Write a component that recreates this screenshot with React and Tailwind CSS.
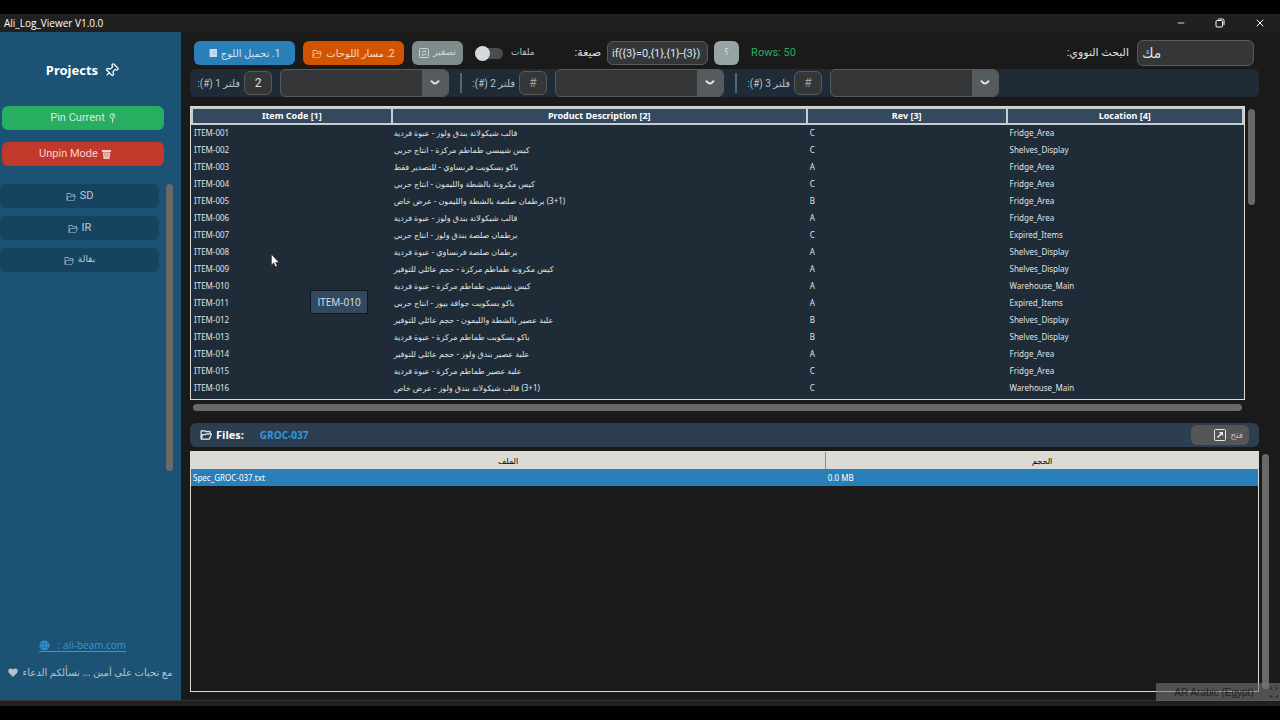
import React, { useState } from 'react';
import { VscFolderOpened } from 'react-icons/vsc';
import { Minus, X, Pin } from 'lucide-react';

const projects = [
  { name: 'SD', size: 'text-[11px]' },
  { name: 'IR', size: 'text-[11px]' },
  { name: 'بقالة', size: 'text-[9px]' },
];

const items = [
  ['ITEM-001', 'قالب شيكولاتة بندق ولوز - عبوة فردية', 'C', 'Fridge_Area'],
  ['ITEM-002', 'كيس شيبسي طماطم مركزة - انتاج حربي', 'C', 'Shelves_Display'],
  ['ITEM-003', 'باكو بسكويت فرنساوي - للتصدير فقط', 'A', 'Fridge_Area'],
  ['ITEM-004', 'كيس مكرونة بالشطة والليمون - انتاج حربي', 'C', 'Fridge_Area'],
  ['ITEM-005', '(3+1) برطمان صلصة بالشطة والليمون - عرض خاص', 'B', 'Fridge_Area'],
  ['ITEM-006', 'قالب شيكولاتة بندق ولوز - عبوة فردية', 'A', 'Fridge_Area'],
  ['ITEM-007', 'برطمان صلصة بندق ولوز - انتاج حربي', 'C', 'Expired_Items'],
  ['ITEM-008', 'برطمان صلصة فرنساوي - عبوة فردية', 'A', 'Shelves_Display'],
  ['ITEM-009', 'كيس مكرونة طماطم مركزة - حجم عائلي للتوفير', 'A', 'Shelves_Display'],
  ['ITEM-010', 'كيس شيبسي طماطم مركزة - عبوة فردية', 'A', 'Warehouse_Main'],
  ['ITEM-011', 'باكو بسكويت جوافة بيور - انتاج حربي', 'A', 'Expired_Items'],
  ['ITEM-012', 'علبة عصير بالشطة والليمون - حجم عائلي للتوفير', 'B', 'Shelves_Display'],
  ['ITEM-013', 'باكو بسكويت طماطم مركزة - عبوة فردية', 'B', 'Shelves_Display'],
  ['ITEM-014', 'علبة عصير بندق ولوز - حجم عائلي للتوفير', 'A', 'Fridge_Area'],
  ['ITEM-015', 'علبة عصير طماطم مركزة - عبوة فردية', 'C', 'Fridge_Area'],
  ['ITEM-016', '(3+1) قالب شيكولاتة بندق ولوز - عرض خاص', 'C', 'Warehouse_Main'],
];

function NotebookIcon() {
  return (
    <svg width="8" height="10" viewBox="0 0 8 10" aria-hidden="true">
      <rect x="1" y="1" width="7" height="8" fill="#c8deee" />
      <path d="M0 2h2M0 4h2M0 6h2M0 8h2" stroke="#c8deee" strokeWidth="0.8" />
      <path d="M3 3.5h4M3 5.5h4" stroke="#8fbbdb" strokeWidth="0.6" />
    </svg>
  );
}

function ReloadIcon() {
  return (
    <svg width="10" height="10" viewBox="0 0 10 10" fill="none" stroke="#d5dcdd" strokeWidth="0.9" aria-hidden="true">
      <rect x="0.5" y="0.5" width="9" height="9" rx="1" />
      <path d="M3 5.2V4.2a1 1 0 0 1 1-1H7M6 2.2l1 1-1 1M7 4.8v1A1 1 0 0 1 6 6.8H3M4 5.8l-1 1 1 1" />
    </svg>
  );
}

function RoundPinIcon() {
  return (
    <svg width="7" height="10" viewBox="0 0 7 10" fill="none" stroke="#d4efdf" strokeWidth="0.9" aria-hidden="true">
      <circle cx="3.5" cy="3" r="2.4" />
      <path d="M3.5 5.4v4.2M3.6 1.6v1.4h1.3" />
    </svg>
  );
}

function BasketIcon() {
  return (
    <svg width="9" height="10" viewBox="0 0 9 10" aria-hidden="true">
      <path d="M0 1h9v2H0zM0.8 3.6h7.4L7.4 10H1.6z" fill="#f3d3cf" />
      <path d="M2 4l4 5.5M4.5 4l2.5 3.5M7 4L3 9.5M4.5 4L2 7.5" stroke="#c0392b" strokeWidth="0.4" />
    </svg>
  );
}

function GlobeIcon() {
  return (
    <svg width="11" height="11" viewBox="0 0 11 11" aria-hidden="true">
      <circle cx="5.5" cy="5.5" r="5" fill="#3498db" />
      <path d="M1 3.8h9M1 7.2h9M5.5 0.5v10M3.2 1.5q-1.2 4 0 8M7.8 1.5q1.2 4 0 8" fill="none" stroke="#1c5274" strokeWidth="0.5" />
    </svg>
  );
}

function HeartIcon() {
  return (
    <svg width="10" height="9" viewBox="0 0 10 9" aria-hidden="true">
      <path d="M5 9L0.8 4.7C-1 2 2-1.2 5 1.4 8-1.2 11 2 9.2 4.7z" fill="#b4c2cb" />
    </svg>
  );
}

function Filter({ id, number, value }) {
  return (
    <div className="flex items-center">
      <label htmlFor={`column-${id}`} dir="rtl" className="w-[46px] pr-1 text-right text-[10px] whitespace-nowrap text-[#b9c3cb]">
        فلتر {number} (#):
      </label>
      <input
        id={`column-${id}`}
        type="text"
        defaultValue={value}
        placeholder="#"
        className="h-6 w-7 rounded-md border border-[#565b5e] bg-[#343638] text-center text-[12px] text-[#dce4ee] placeholder:text-[#9e9e9e]"
      />
      <div className="relative ml-2 h-7 w-[169px] overflow-hidden rounded-md border border-[#565b5e] bg-[#343638]">
        <select id={`value-${id}`} aria-label={`فلتر ${number}`} className="h-full w-full appearance-none bg-transparent px-2 text-[12px] text-white">
          <option></option>
        </select>
        <span className="pointer-events-none absolute inset-y-0 right-0 flex w-[26px] items-center justify-center bg-[#565b5e]">
          <svg width="10" height="6" viewBox="0 0 10 6" fill="none" stroke="#dce4ee" strokeWidth="2" strokeLinecap="round">
            <path d="M1.5 1.2Q5 5.8 8.5 1.2" />
          </svg>
        </span>
      </div>
    </div>
  );
}

function Sidebar() {
  return (
    <aside className="flex w-[181px] shrink-0 flex-col bg-[#1c5274]">
      <h1 className="mt-7 flex items-center justify-center gap-1.5 pr-4 text-[13px] leading-5 font-bold text-white font-['Noto_Sans','DejaVu_Sans',sans-serif]">
        Projects
        <Pin className="h-[15px] w-[15px] rotate-45" strokeWidth={2} />
      </h1>
      <div className="mt-[26px] flex flex-col gap-3 pr-[17px] pl-0.5">
        <button className="flex h-6 items-center justify-center gap-1 rounded-md bg-[#27ae60] text-[11px] text-[#d4efdf]">
          Pin Current <RoundPinIcon />
        </button>
        <button className="flex h-6 items-center justify-center gap-1 rounded-md bg-[#c0392b] pr-4 text-[11px] text-[#f3d3cf]">
          Unpin Mode <BasketIcon />
        </button>
      </div>
      <div className="mt-[18px] flex h-[287px] justify-between pr-2">
        <ul className="flex w-[159px] flex-col gap-2">
          {projects.map(({ name, size }) => (
            <li key={name}>
              <button className="flex h-6 w-full items-center justify-center gap-1 rounded-md bg-[#154360] text-[#b8cedd]">
                <VscFolderOpened className="mt-0.5 h-[10px] w-[10px]" />
                <span className={size}>{name}</span>
              </button>
            </li>
          ))}
        </ul>
        <div className="w-[7px] rounded bg-[#696969]"></div>
      </div>
      <footer className="mt-auto flex flex-col items-center gap-3 pb-5 font-['Open_Sans','DejaVu_Sans',sans-serif]">
        <a href="https://ali-beam.com" className="mr-4 flex items-center gap-2 border-b border-[#3498db] text-[10px] leading-3 text-[#3498db]">
          <GlobeIcon /> : ali-beam.com
        </a>
        <p dir="rtl" className="flex items-center gap-1 text-[10px] leading-4 whitespace-nowrap text-[#b4c2cb]">
          مع تحيات علي أمين ... نسألكم الدعاء <HeartIcon />
        </p>
      </footer>
    </aside>
  );
}

function Toolbar() {
  const [formula, setFormula] = useState('if({3}=0,{1},{1}-{3})');
  const [search, setSearch] = useState('مك');
  const [files, setFiles] = useState(false);

  return (
    <div className="flex h-[26px] items-center pr-[5px] pl-1">
      <button dir="rtl" className="flex h-6 w-[101px] items-center justify-center gap-1 rounded-md bg-[#2980b9] text-[10px] text-[#d4e6f1]">
        1. تحميل اللوج <NotebookIcon />
      </button>
      <button dir="rtl" className="ml-2 flex h-6 w-[101px] items-center justify-center gap-1 rounded-md bg-[#d35400] text-[10px] text-[#f6ddcc]">
        2. مسار اللوحات <VscFolderOpened className="mt-0.5 h-[10px] w-[10px]" />
      </button>
      <button dir="rtl" className="ml-2 flex h-6 w-[51px] items-center justify-center gap-1 rounded-md bg-[#7f8c8d] text-[9px] text-[#d5dcdd]">
        تصفير <ReloadIcon />
      </button>
      <input
        id="files-switch"
        type="checkbox"
        role="switch"
        checked={files}
        onChange={(e) => setFiles(e.target.checked)}
        className="relative ml-3 h-[11px] w-7 appearance-none rounded-full bg-[#4a4d50] before:absolute before:-top-0.5 before:left-0 before:h-[15px] before:w-[15px] before:rounded-full before:bg-[#d5d9de] checked:before:left-[13px]"
      />
      <label htmlFor="files-switch" className="ml-2 text-[9px] text-[#b9c3cb]">ملفات</label>
      <label htmlFor="formula" dir="rtl" className="ml-10 text-[11px] text-[#dce4ee]">صيغة:</label>
      <input
        id="formula"
        type="text"
        value={formula}
        onChange={(e) => setFormula(e.target.value)}
        className="ml-1.5 h-6 w-[101px] rounded-md border border-[#565b5e] bg-[#343638] px-1 text-[11px] text-[#dce4ee]"
      />
      <button className="ml-1.5 h-6 w-[25px] rounded-md bg-[#95a5a6] text-[9px] text-[#dde4e5]">؟</button>
      <span className="ml-3 text-[11px] text-[#27ae60]">Rows: 50</span>
      <label htmlFor="search" dir="rtl" className="ml-auto text-[11px] text-[#dce4ee]">البحث النووي:</label>
      <input
        id="search"
        type="text"
        value={search}
        onChange={(e) => setSearch(e.target.value)}
        className="ml-2 h-[26px] w-[117px] rounded-md border border-[#565b5e] bg-[#343638] px-1 text-[14px] text-[#dce4ee]"
      />
    </div>
  );
}

function ItemsTable() {
  const th = 'border-2 border-[#c5cdd0] bg-[#34495e] p-0 text-center font-bold text-white';

  return (
    <div className="relative mt-[9px] flex gap-[3px]">
      <div className="grow border border-[#dcdad5] bg-[#1f2b36] pb-[3px] font-['Noto_Sans','DejaVu_Sans',sans-serif]">
        <table className="w-full table-fixed border-collapse text-[8px] text-[#dfe4e8]">
          <thead>
            <tr className="h-4 text-[9px] leading-3">
              <th className={`${th} w-[19%]`}>Item Code [1]</th>
              <th className={`${th} w-[39.5%]`}>Product Description [2]</th>
              <th className={`${th} w-[19%]`}>Rev [3]</th>
              <th className={th}>Location [4]</th>
            </tr>
          </thead>
          <tbody>
            {items.map(([code, description, rev, location]) => (
              <tr key={code} className="h-[17px] leading-4">
                <td className="p-0 pl-0.5">{code}</td>
                <td dir="rtl" className="p-0 pl-0.5 text-left whitespace-nowrap">{description}</td>
                <td className="p-0 pl-[3px]">{rev}</td>
                <td className="p-0 pl-[3px]">{location}</td>
              </tr>
            ))}
          </tbody>
        </table>
      </div>
      <div className="mt-[3px] mr-1 h-24 w-[7px] shrink-0 rounded bg-[#696969]"></div>

      <svg className="absolute top-[148px] left-[81px]" width="9" height="14" viewBox="0 0 9 14" aria-hidden="true">
        <path d="M0.5 0.5v10.5l2.3-2.2 1.7 4 1.7-0.7-1.7-3.9h3.3z" fill="#fff" stroke="#222" strokeWidth="0.4" />
      </svg>
      <div role="tooltip" className="absolute top-[184px] left-[120px] flex h-6 w-[58px] items-center justify-center border border-[#0d1a26] bg-[#34495e] text-[10px] text-[#dce4ee] font-['Open_Sans',sans-serif]">
        ITEM-010
      </div>
    </div>
  );
}

function FilesPanel() {
  return (
    <section className="flex grow flex-col">
      <div className="mr-[21px] flex h-6 items-center rounded-md bg-[#2c3e50] pr-2.5 pl-2.5 font-['Open_Sans','DejaVu_Sans',sans-serif]">
        <h2 className="flex items-center gap-1 text-[11px] font-bold text-white">
          <VscFolderOpened className="h-3 w-3" strokeWidth={0.5} /> Files:
        </h2>
        <span className="ml-4 text-[10px] font-bold text-[#3498db]">GROC-037</span>
        <button dir="rtl" className="ml-auto flex h-5 w-[58px] items-center gap-1 rounded-md bg-[#555] px-1.5 text-[9px] text-[#bfbfbf]">
          فتح
          <svg width="12" height="12" viewBox="0 0 12 12" fill="none" stroke="#e5e5e5" aria-hidden="true">
            <rect x="0.5" y="0.5" width="11" height="11" rx="1" />
            <path d="M3.5 8.5L7.5 4.5" strokeWidth="1.6" />
            <path d="M4.8 3h4.2v4.2z" fill="#e5e5e5" stroke="none" />
          </svg>
        </button>
      </div>
      <div className="mt-1 mr-2.5 mb-2 flex grow gap-[3px]">
        <div className="grow border border-[#dcdad5] font-['Noto_Sans','DejaVu_Sans',sans-serif]">
          <table className="w-full table-fixed border-collapse text-[8px] leading-4">
            <thead>
              <tr className="h-[17px] bg-[#dcdad5] text-black">
                <th className="w-[59.5%] border-r border-[#8f8d88] p-0 text-center font-normal">الملف</th>
                <th className="p-0 text-center font-normal">الحجم</th>
              </tr>
            </thead>
            <tbody>
              <tr className="h-[17px] bg-[#2980b9] text-white">
                <td className="p-0 pl-0.5">Spec_GROC-037.txt</td>
                <td className="p-0 pl-0.5">0.0 MB</td>
              </tr>
            </tbody>
          </table>
        </div>
        <div className="my-[3px] mr-px w-[7px] shrink-0 rounded bg-[#696969]"></div>
      </div>
    </section>
  );
}

export default function App() {
  return (
    <div className="relative flex min-h-screen flex-col bg-black py-3.5 font-['Roboto','DejaVu_Sans',sans-serif]">
      <header className="flex h-[18px] items-center justify-between bg-[#202020] pr-3.5 pl-1 text-white">
        <span className="text-[10px] leading-3 font-['Open_Sans',sans-serif]">Ali_Log_Viewer V1.0.0</span>
        <div className="flex items-center gap-[29px]">
          <button aria-label="Minimize"><Minus className="h-2.5 w-2.5" strokeWidth={2} /></button>
          <button aria-label="Restore">
            <svg width="10" height="10" viewBox="0 0 10 10" fill="none" stroke="#fff">
              <rect x="1" y="2.5" width="6.5" height="6.5" rx="1" />
              <path d="M3 1h4.5A1.5 1.5 0 0 1 9 2.5V7" />
            </svg>
          </button>
          <button aria-label="Close"><X className="h-3 w-3" strokeWidth={2} /></button>
        </div>
      </header>

      <div className="flex grow bg-[#1a1a1a]">
        <Sidebar />
        <main className="flex min-w-0 grow flex-col pt-2 pl-[9px]">
          <div className="mr-[21px]">
            <Toolbar />
            <div className="mt-[3px] flex h-7 items-center rounded-md bg-[#1f2b36] pl-2">
              <Filter id="1" number="1" value="2" />
              <div className="mx-[11px] h-5 w-0.5 bg-[#566573]"></div>
              <Filter id="2" number="2" />
              <div className="mx-[11px] h-5 w-0.5 bg-[#566573]"></div>
              <Filter id="3" number="3" />
            </div>
          </div>
          <div className="mr-[21px]">
            <ItemsTable />
            <div className="mt-1 mr-[17px] mb-3 ml-[3px] h-[7px] rounded bg-[#696969]"></div>
          </div>
          <FilesPanel />
        </main>
      </div>
      <div className="h-1.5 border-t border-[#333] bg-[#202020]"></div>

      <div className="absolute right-0 bottom-[19px] flex h-[18px] w-31 items-center justify-center bg-[#777]/60 pr-2 text-[10px] text-[#222] font-['Liberation_Sans',sans-serif]">
        AR Arabic (Egypt)
        <svg className="absolute right-0.5" width="8" height="12" viewBox="0 0 8 12" fill="none" stroke="#222">
          <path d="M2.5 1L0.5 2.5 2.5 4M5.5 1l2 1.5-2 1.5M0.5 9v2h2M7.5 9v2h-2" />
        </svg>
      </div>
    </div>
  );
}
